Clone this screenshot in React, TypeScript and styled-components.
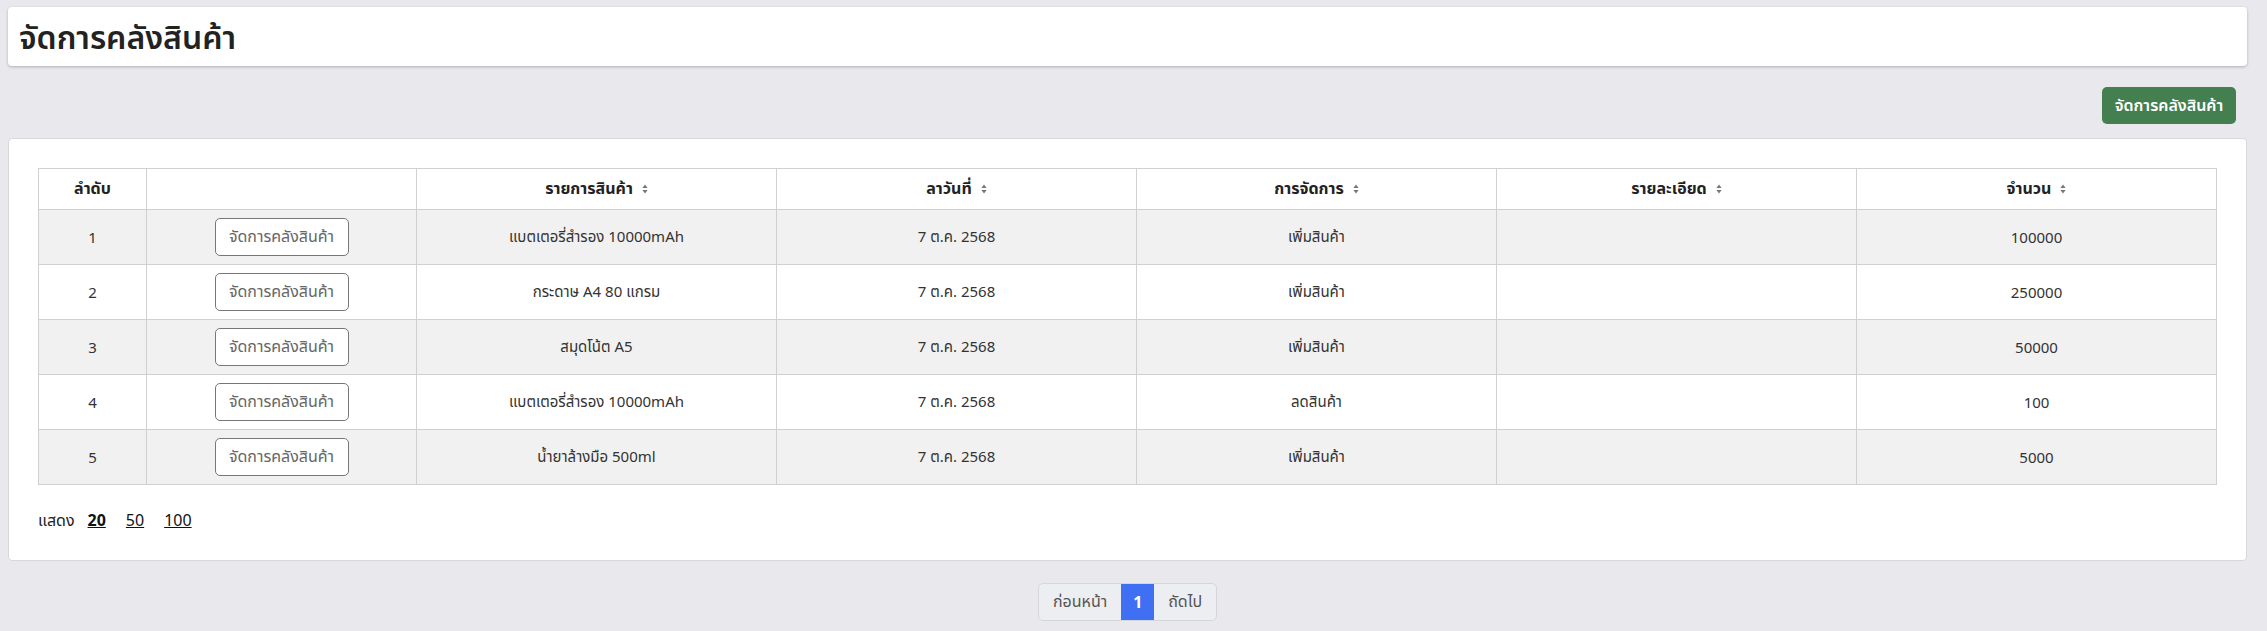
import React from "react";
import styled, { createGlobalStyle } from "styled-components";

const GlobalStyle = createGlobalStyle`
  html, body { margin: 0; padding: 0; background: #e9e9ed; }
  body { font-family: "Noto Sans", "Noto Sans Thai", "Liberation Sans", sans-serif; color: #333; }
  * { box-sizing: border-box; }
`;

const Page = styled.div`
  padding: 7px 20px 12px 8px;
  display: flex;
  flex-direction: column;
`;

const HeaderCard = styled.header`
  height: 59px;
  background: #fff;
  border-radius: 4px;
  box-shadow: 0 1px 3px rgba(0, 0, 0, 0.25);
  display: flex;
  align-items: center;
  padding-left: 11px;
`;

const Title = styled.h1`
  margin: 0;
  font-size: 32px;
  font-weight: 600;
  color: #222;
  line-height: 1;
`;

const Toolbar = styled.div`
  display: flex;
  justify-content: flex-end;
  padding: 21px 11px 14px 0;
`;

const PrimaryButton = styled.button`
  height: 37px;
  width: 134px;
  border: none;
  border-radius: 5px;
  background: #44804f;
  color: #fff;
  font-family: inherit;
  font-size: 16px;
  font-weight: 600;
  cursor: pointer;
  padding: 0;
`;

const Card = styled.section`
  background: #fff;
  border: 1px solid #d8d8dc;
  border-radius: 4px;
  padding: 29px 29px 30px 29px;
`;

const Table = styled.table`
  width: 100%;
  border-collapse: collapse;
  table-layout: fixed;
  font-size: 15px;
`;

const Th = styled.th<{ $w?: number }>`
  ${(p) => (p.$w ? `width: ${p.$w}px;` : "")}
  height: 41px;
  border: 1px solid #d0d0d0;
  font-weight: 700;
  font-size: 16px;
  color: #222;
  text-align: center;
  padding: 0 8px;
`;

const HeadLabel = styled.span`
  display: inline-flex;
  align-items: center;
  gap: 9px;
`;

const Tr = styled.tr<{ $striped: boolean }>`
  background: ${(p) => (p.$striped ? "#f1f1f1" : "#fff")};
`;

const Td = styled.td`
  height: 55px;
  border: 1px solid #d0d0d0;
  text-align: center;
  color: #333;
  padding: 0 8px;
`;

const OutlineButton = styled.button`
  width: 134px;
  height: 38px;
  border: 1px solid #777;
  border-radius: 5px;
  background: #fff;
  color: #666;
  font-family: inherit;
  font-size: 16px;
  cursor: pointer;
  padding: 0;
`;

const PageSize = styled.div`
  margin-top: 25px;
  display: flex;
  align-items: center;
  gap: 20px;
  font-size: 16px;
  color: #222;
  line-height: 20px;
`;

const PageSizeLabel = styled.span`
  margin-right: -7px;
`;

const SizeLink = styled.a<{ $active?: boolean }>`
  color: #111;
  text-decoration: underline;
  font-weight: ${(p) => (p.$active ? 700 : 400)};
  cursor: pointer;
`;

const Pager = styled.nav`
  display: flex;
  justify-content: center;
  padding-top: 22px;
`;

const PagerGroup = styled.div`
  display: flex;
  height: 38px;
  border: 1px solid #d3d6db;
  border-radius: 5px;
  overflow: hidden;
  background: #eceef1;
`;

const PagerItem = styled.span<{ $active?: boolean }>`
  display: flex;
  align-items: center;
  justify-content: center;
  padding: 0 ${(p) => (p.$active ? 11 : 14)}px;
  min-width: 33px;
  font-size: 16px;
  font-weight: ${(p) => (p.$active ? 700 : 400)};
  color: ${(p) => (p.$active ? "#fff" : "#555")};
  background: ${(p) => (p.$active ? "#3f6ff3" : "transparent")};
`;

const SortIcon = () => (
  <svg width="6" height="10" viewBox="0 0 6 10" aria-hidden="true">
    <path d="M3 0.5 L5.6 4 H0.4 Z" fill="#777" />
    <path d="M3 9.5 L5.6 6 H0.4 Z" fill="#777" />
  </svg>
);

const rows = [
  { no: 1, item: "แบตเตอรี่สำรอง 10000mAh", date: "7 ต.ค. 2568", action: "เพิ่มสินค้า", detail: "", qty: "100000" },
  { no: 2, item: "กระดาษ A4 80 แกรม", date: "7 ต.ค. 2568", action: "เพิ่มสินค้า", detail: "", qty: "250000" },
  { no: 3, item: "สมุดโน้ต A5", date: "7 ต.ค. 2568", action: "เพิ่มสินค้า", detail: "", qty: "50000" },
  { no: 4, item: "แบตเตอรี่สำรอง 10000mAh", date: "7 ต.ค. 2568", action: "ลดสินค้า", detail: "", qty: "100" },
  { no: 5, item: "น้ำยาล้างมือ 500ml", date: "7 ต.ค. 2568", action: "เพิ่มสินค้า", detail: "", qty: "5000" },
];

const sortable = ["รายการสินค้า", "ลาวันที่", "การจัดการ", "รายละเอียด", "จำนวน"];

export default function App() {
  return (
    <>
      <GlobalStyle />
      <Page>
        <HeaderCard>
          <Title>จัดการคลังสินค้า</Title>
        </HeaderCard>
        <Toolbar>
          <PrimaryButton>จัดการคลังสินค้า</PrimaryButton>
        </Toolbar>
        <Card>
          <Table>
            <thead>
              <tr>
                <Th $w={108}>ลำดับ</Th>
                <Th $w={270}></Th>
                {sortable.map((h) => (
                  <Th key={h}>
                    <HeadLabel>
                      {h}
                      <SortIcon />
                    </HeadLabel>
                  </Th>
                ))}
              </tr>
            </thead>
            <tbody>
              {rows.map((r, i) => (
                <Tr key={r.no} $striped={i % 2 === 0}>
                  <Td>{r.no}</Td>
                  <Td>
                    <OutlineButton>จัดการคลังสินค้า</OutlineButton>
                  </Td>
                  <Td>{r.item}</Td>
                  <Td>{r.date}</Td>
                  <Td>{r.action}</Td>
                  <Td>{r.detail}</Td>
                  <Td>{r.qty}</Td>
                </Tr>
              ))}
            </tbody>
          </Table>
          <PageSize>
            <PageSizeLabel>แสดง</PageSizeLabel>
            <SizeLink $active>20</SizeLink>
            <SizeLink>50</SizeLink>
            <SizeLink>100</SizeLink>
          </PageSize>
        </Card>
        <Pager>
          <PagerGroup>
            <PagerItem>ก่อนหน้า</PagerItem>
            <PagerItem $active>1</PagerItem>
            <PagerItem>ถัดไป</PagerItem>
          </PagerGroup>
        </Pager>
      </Page>
    </>
  );
}
